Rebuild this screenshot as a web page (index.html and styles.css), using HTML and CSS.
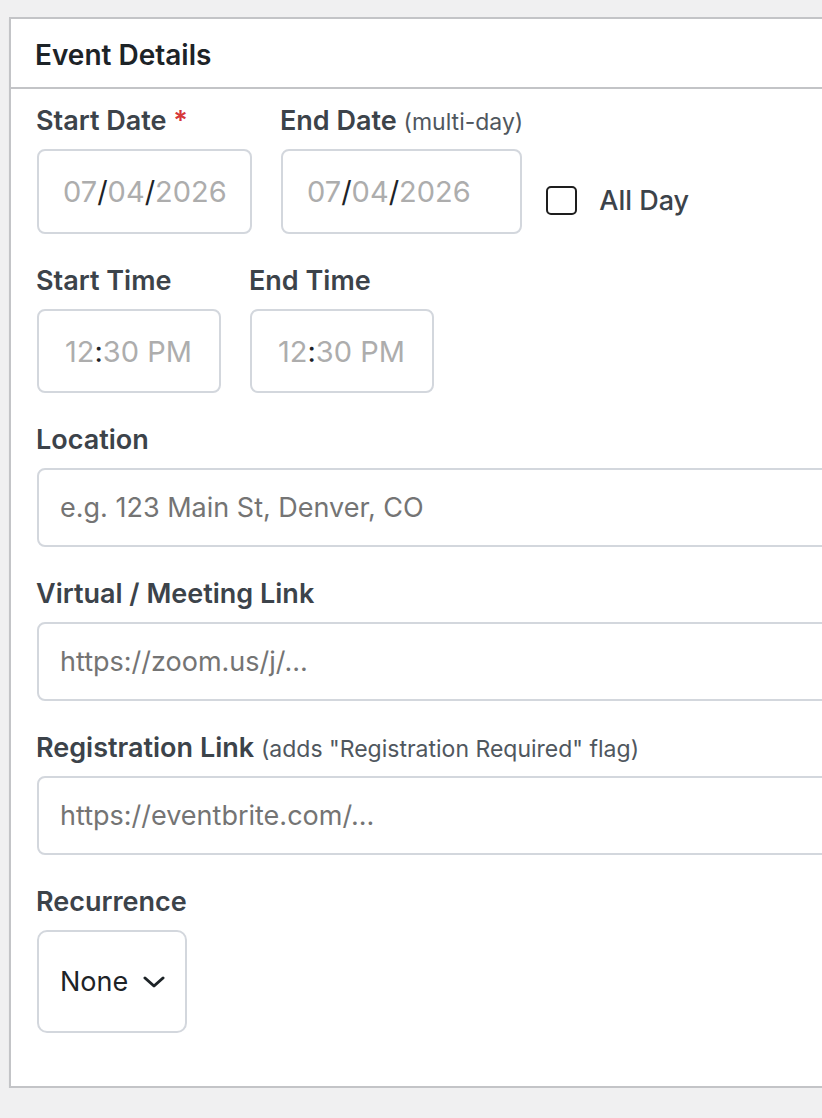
FILE: index.html
```html
<!DOCTYPE html>
<html lang="en">
<head>
    <meta charset="UTF-8">
    <meta name="viewport" content="width=device-width, initial-scale=1.0">
    <title>Event Details</title>
    <link rel="stylesheet" href="styles.css">
</head>
<body>
    <div class="postbox">
        <h2 class="postbox-title">Event Details</h2>

        <div class="postbox-inside">
            <!-- Dates -->
            <div class="field-row">
                <div class="field">
                    <label>Start Date <span class="required">*</span></label>
                    <div class="fake-input date-start">
                        <span class="dim">07</span>/<span class="dim">04</span>/<span class="dim">2026</span>
                    </div>
                </div>
                <div class="field">
                    <label>End Date <span class="hint">(multi-day)</span></label>
                    <div class="fake-input date-end">
                        <span class="dim">07</span>/<span class="dim">04</span>/<span class="dim">2026</span>
                    </div>
                </div>
                <label class="checkbox-label">
                    <input type="checkbox" class="checkbox">
                    All Day
                </label>
            </div>

            <!-- Times -->
            <div class="field-row">
                <div class="field">
                    <label>Start Time</label>
                    <div class="fake-input time">
                        <span class="dim">12</span>:<span class="dim">30 PM</span>
                    </div>
                </div>
                <div class="field">
                    <label>End Time</label>
                    <div class="fake-input time">
                        <span class="dim">12</span>:<span class="dim">30 PM</span>
                    </div>
                </div>
            </div>

            <div class="field">
                <label for="location">Location</label>
                <input type="text" id="location" class="text-input" placeholder="e.g. 123 Main St, Denver, CO">
            </div>

            <div class="field">
                <label for="virtual">Virtual / Meeting Link</label>
                <input type="text" id="virtual" class="text-input" placeholder="https://zoom.us/j/...">
            </div>

            <div class="field">
                <label for="registration">Registration Link <span class="hint">(adds "Registration Required" flag)</span></label>
                <input type="text" id="registration" class="text-input" placeholder="https://eventbrite.com/...">
            </div>

            <div class="field">
                <label>Recurrence</label>
                <div class="fake-select">
                    None
                    <svg class="chevron" width="22" height="14" viewBox="0 0 22 14">
                        <path d="M2 3 L11 11 L20 3" fill="none" stroke="#1d2327" stroke-width="3" stroke-linecap="round" stroke-linejoin="round"/>
                    </svg>
                </div>
            </div>
        </div>
    </div>
</body>
</html>
```

FILE: styles.css
```css
html, body {
    overflow: hidden;
}

body {
    margin: 0;
    padding: 17px 0 0 9px;
    background-color: #f0f0f1;
    font-family: Inter, "Noto Sans", sans-serif;
    color: #3c434a;
}

.postbox {
    width: 1000px;
    background: #fff;
    border: 2px solid #c3c4c7;
    box-shadow: 0 2px 2px rgba(0, 0, 0, 0.04);
}

.postbox-title {
    margin: 0;
    padding: 20px 24px 16px;
    font-size: 28px;
    line-height: 32px;
    font-weight: 600;
    color: #1d2327;
    border-bottom: 2px solid #c3c4c7;
}

.postbox-inside {
    padding: 14px 26px 24px;
}

.field-row {
    display: flex;
    gap: 29px;
}

.field {
    margin-bottom: 29px;
}

.field label {
    display: block;
    margin-left: -1px;
    font-size: 27px;
    line-height: 36px;
    font-weight: 600;
    margin-bottom: 10px;
}

.required {
    color: #d63638;
}

.hint {
    font-size: 23px;
    line-height: 0;
    font-weight: 400;
    color: #50575e;
}

.fake-input {
    box-sizing: border-box;
    display: flex;
    align-items: center;
    padding-left: 26px;
    border: 2px solid #d3d7dd;
    border-radius: 8px;
    font-size: 29px;
    color: #1d2327;
}

.fake-input .dim {
    color: #adadad;
}

.date-start {
    width: 215px;
    height: 85px;
    padding-left: 24px;
}

.date-end {
    width: 241px;
    height: 85px;
    padding-left: 24px;
}

.time {
    width: 184px;
    height: 84px;
}

.checkbox-label {
    display: flex;
    align-items: center;
    gap: 22px;
    margin-top: 81px;
    margin-left: -6px;
    align-self: flex-start;
    font-size: 27px;
    font-weight: 500;
}

.checkbox {
    appearance: none;
    margin: 0;
    width: 31px;
    height: 29px;
    border: 2px solid #1e1e1e;
    border-radius: 5px;
}

.text-input {
    box-sizing: border-box;
    display: block;
    width: 100%;
    height: 79px;
    padding: 0 21px;
    border: 2px solid #d3d7dd;
    border-radius: 8px;
    font-family: inherit;
    font-size: 27px;
    outline: none;
}

.text-input::placeholder {
    color: #747474;
}

.fake-select {
    box-sizing: border-box;
    display: inline-flex;
    align-items: center;
    gap: 15px;
    width: 150px;
    height: 103px;
    padding-left: 21px;
    border: 2px solid #d3d7dd;
    border-radius: 10px;
    font-size: 27px;
    color: #1d2327;
}

.chevron {
    display: block;
}
```
